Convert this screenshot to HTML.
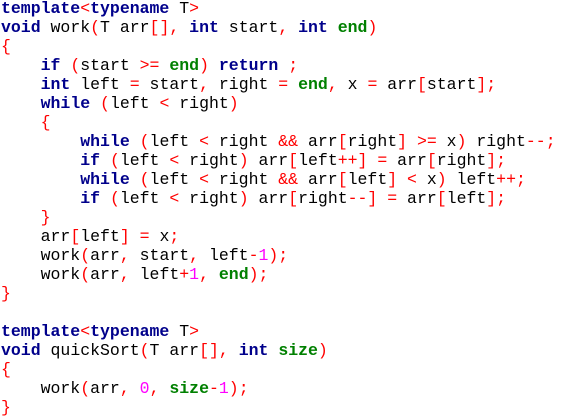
<!DOCTYPE html>
<html><head><meta charset="utf-8"><style>
html,body{margin:0;padding:0;background:#fff;width:563px;height:417px;overflow:hidden}
pre{margin:0;position:absolute;left:1px;top:-1px;font-family:"Liberation Mono","Courier New",monospace;font-size:16.5px;line-height:19px;color:#000}
b{color:#00008b;font-weight:bold}
i{font-style:normal;color:#ff0000}
g{color:#008000;font-weight:bold}
n{color:#ff00ff}
</style></head><body><pre><b>template</b><i>&lt;</i><b>typename</b> T<i>&gt;</i>
<b>void</b> work<i>(</i>T arr<i>[],</i> <b>int</b> start<i>,</i> <b>int</b> <g>end</g><i>)</i>
<i>{</i>
    <b>if</b> <i>(</i>start <i>&gt;=</i> <g>end</g><i>)</i> <b>return</b> <i>;</i>
    <b>int</b> left <i>=</i> start<i>,</i> right <i>=</i> <g>end</g><i>,</i> x <i>=</i> arr<i>[</i>start<i>];</i>
    <b>while</b> <i>(</i>left <i>&lt;</i> right<i>)</i>
    <i>{</i>
        <b>while</b> <i>(</i>left <i>&lt;</i> right <i>&amp;&amp;</i> arr<i>[</i>right<i>]</i> <i>&gt;=</i> x<i>)</i> right<i>--;</i>
        <b>if</b> <i>(</i>left <i>&lt;</i> right<i>)</i> arr<i>[</i>left<i>++]</i> <i>=</i> arr<i>[</i>right<i>];</i>
        <b>while</b> <i>(</i>left <i>&lt;</i> right <i>&amp;&amp;</i> arr<i>[</i>left<i>]</i> <i>&lt;</i> x<i>)</i> left<i>++;</i>
        <b>if</b> <i>(</i>left <i>&lt;</i> right<i>)</i> arr<i>[</i>right<i>--]</i> <i>=</i> arr<i>[</i>left<i>];</i>
    <i>}</i>
    arr<i>[</i>left<i>]</i> <i>=</i> x<i>;</i>
    work<i>(</i>arr<i>,</i> start<i>,</i> left<i>-</i><n>1</n><i>);</i>
    work<i>(</i>arr<i>,</i> left<i>+</i><n>1</n><i>,</i> <g>end</g><i>);</i>
<i>}</i>

<b>template</b><i>&lt;</i><b>typename</b> T<i>&gt;</i>
<b>void</b> quickSort<i>(</i>T arr<i>[],</i> <b>int</b> <g>size</g><i>)</i>
<i>{</i>
    work<i>(</i>arr<i>,</i> <n>0</n><i>,</i> <g>size</g><i>-</i><n>1</n><i>);</i>
<i>}</i></pre></body></html>
